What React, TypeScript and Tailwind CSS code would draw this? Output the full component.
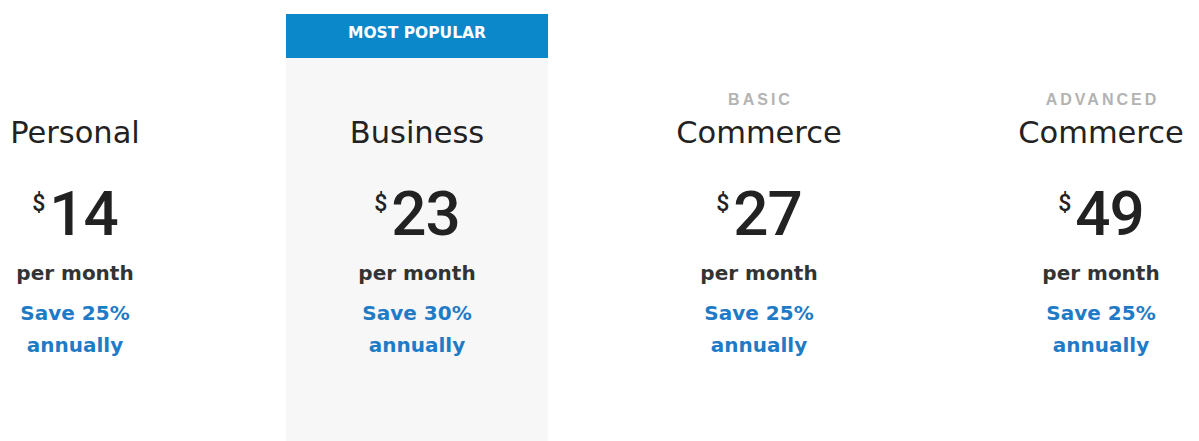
const plans = [
  { label: '', name: 'Personal', price: '14', save: '25', popular: false },
  { label: '', name: 'Business', price: '23', save: '30', popular: true },
  { label: 'BASIC', name: 'Commerce', price: '27', save: '25', popular: false },
  { label: 'ADVANCED', name: 'Commerce', price: '49', save: '25', popular: false },
]

function PlanColumn({ plan }: { plan: (typeof plans)[number] }) {
  return (
    <div className={`w-[262px] shrink-0 flex flex-col ${plan.popular ? 'bg-[#f7f7f7]' : ''}`}>
      <div
        className={`h-[44px] pt-[12px] text-center text-white text-[15.5px] leading-[15px] font-bold font-['DejaVu_Sans',sans-serif] ${plan.popular ? 'bg-[#0a88c9]' : 'bg-white'}`}
      >
        {plan.popular ? 'MOST POPULAR' : ''}
      </div>
      <div className="flex flex-col items-center pt-[34px]">
        <div className="h-[16px] mb-[7px] text-[16px] leading-[16px] font-bold tracking-[3px] pl-[3px] text-[#b3b3b3] font-['Liberation_Sans',Arial,sans-serif]">
          {plan.label}
        </div>
        <div className="text-[30.5px] leading-[36px] text-[#222] font-['DejaVu_Sans',sans-serif]">
          {plan.name}
        </div>
        <div className="mt-[32px] flex items-start gap-[4px] text-[#222] font-['Roboto',sans-serif]">
          <span className="mt-[9px] text-[23px] leading-[23px] font-medium">$</span>
          <span className="text-[62px] leading-[62px] font-medium tracking-[-1px]">{plan.price}</span>
        </div>
        <div className="mt-[16px] text-[20px] leading-[24px] font-bold text-[#333] font-['DejaVu_Sans',sans-serif]">
          per month
        </div>
        <div className="mt-[12px] text-center text-[20px] leading-[32px] font-bold text-[#1f7bc6] font-['DejaVu_Sans',sans-serif]">
          Save {plan.save}%
          <br />
          annually
        </div>
      </div>
    </div>
  )
}

export default function App() {
  return (
    <div className="h-[441px] w-full overflow-hidden bg-white">
      <div className="flex h-full gap-[80px] ml-[-56px] pt-[14px]">
        {plans.map((p) => (
          <PlanColumn key={p.label + p.name} plan={p} />
        ))}
      </div>
    </div>
  )
}
